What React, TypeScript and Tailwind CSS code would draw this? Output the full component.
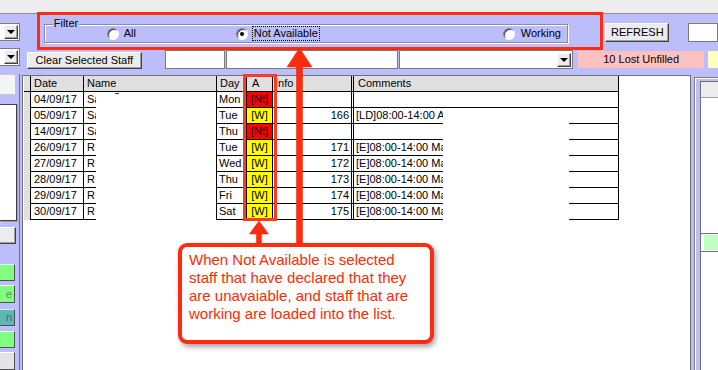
import React from 'react'

const rows = [
  { d: '04/09/17', n: 'Sa', day: 'Mon', a: '[Nt]', info: '', c: '' },
  { d: '05/09/17', n: 'Sa', day: 'Tue', a: '[W]', info: '166', c: '[LD]08:00-14:00 A' },
  { d: '14/09/17', n: 'Sa', day: 'Thu', a: '[Nt]', info: '', c: '' },
  { d: '26/09/17', n: 'R', day: 'Tue', a: '[W]', info: '171', c: '[E]08:00-14:00 Ma' },
  { d: '27/09/17', n: 'R', day: 'Wed', a: '[W]', info: '172', c: '[E]08:00-14:00 Ma' },
  { d: '28/09/17', n: 'R', day: 'Thu', a: '[W]', info: '173', c: '[E]08:00-14:00 Ma' },
  { d: '29/09/17', n: 'R', day: 'Fri', a: '[W]', info: '174', c: '[E]08:00-14:00 Ma' },
  { d: '30/09/17', n: 'R', day: 'Sat', a: '[W]', info: '175', c: '[E]08:00-14:00 Ma' },
]

const headers = [
  ['w-[53px] pl-[3px]', 'Date'],
  ['w-[133px] pl-[3px]', 'Name'],
  ['w-[30px] pl-[3px]', 'Day'],
  ['w-[26px] pl-[5px]', 'A'],
  ['w-[79px] pl-[2px]', 'Info'],
  ['w-[2px]', ''],
  ['w-[265px] pl-[4px]', 'Comments'],
]

const btn =
  'bg-[#ececec] border border-t-white border-l-white border-r-[#404040] border-b-[#404040] shadow-[inset_-1px_-1px_0_#a0a0a0]'
const edit = 'bg-white border border-[#7a7a7a]'

function Radio({ checked }: { checked?: boolean }) {
  return (
    <span className="w-[12px] h-[12px] rounded-full bg-white border border-[#808080] border-b-white border-r-white shadow-[inset_1px_1px_0_#404040] flex items-center justify-center">
      {checked && <span className="w-[4px] h-[4px] rounded-full bg-black" />}
    </span>
  )
}

function DropBtn() {
  return (
    <span className={`${btn} w-[14px] h-[14px] flex items-center justify-center`}>
      <span className="w-0 h-0 border-l-[4px] border-r-[4px] border-t-[4px] border-l-transparent border-r-transparent border-t-black" />
    </span>
  )
}

export default function App() {
  return (
    <div className="relative w-[718px] h-[370px] overflow-hidden bg-[#bcbefc] font-['Liberation_Sans',Arial,sans-serif] text-[11px] text-black leading-none">
      {/* title strip */}
      <div className="h-[14px] bg-[#ededed] border-b border-[#8e8e8e]" />

      {/* row 1 */}
      <div className="h-[34px] flex items-start">
        <div className="mt-[9px] w-[20px] h-[18px] bg-white border border-l-0 border-[#7a7a7a] flex items-center justify-end pr-[1px]">
          <DropBtn />
        </div>
        <div className="relative mt-[10px] ml-[24px] w-[532px] h-[19px] border border-[#8a8a9c] shadow-[inset_1px_1px_0_#ffffff,1px_1px_0_#ffffff] flex items-center">
          <span className="absolute -top-[7px] left-[8px] bg-[#bcbefc] px-[1px]">Filter</span>
          <div className="ml-[62px] w-[129px] flex items-center gap-[5px]">
            <Radio />
            <span>All</span>
          </div>
          <div className="w-[267px] flex items-center gap-[4px]">
            <Radio checked />
            <span className="border border-dotted border-black px-[1px] py-[1px]">Not Available</span>
          </div>
          <div className="flex items-center gap-[6px]">
            <Radio />
            <span>Working</span>
          </div>
        </div>
        <div className={`${btn} mt-[9px] ml-[37px] w-[65px] h-[19px] flex items-center justify-center`}>REFRESH</div>
        <div className={`${edit} mt-[9px] ml-[19px] w-[30px] h-[19px]`} />
      </div>

      {/* row 2 */}
      <div className="h-[24px] flex items-start">
        <div className="w-[20px] h-[18px] bg-white border border-l-0 border-[#7a7a7a] flex items-center justify-end pr-[1px]">
          <DropBtn />
        </div>
        <div className={`${btn} mt-[4px] ml-[7px] w-[116px] h-[17px] flex items-center justify-center`}>Clear Selected Staff</div>
        <div className={`${edit} mt-[2px] ml-[23px] w-[61px] h-[19px]`} />
        <div className={`${edit} mt-[2px] ml-[1px] w-[173px] h-[19px]`} />
        <div className={`${edit} mt-[2px] ml-[1px] w-[176px] h-[19px] flex items-center justify-end pr-[1px]`}>
          <DropBtn />
        </div>
        <div className="mt-[3px] ml-[5px] w-[127px] h-[17px] bg-[#ffc0c0] flex items-center justify-center">10 Lost Unfilled</div>
        <div className="mt-[3px] ml-[4px] w-[10px] h-[17px] bg-[#ffffc0]" />
      </div>

      {/* main area */}
      <div className="flex items-start h-[298px]">
        {/* left sidebar */}
        <div className="mt-[2px] w-[20px] h-[296px] border-r border-[#707070] flex flex-col">
          <div className="w-[16px] h-[21px] bg-[#f4f4f4] border border-l-0 border-[#c8c8c8]" />
          <div className="mt-[9px] w-[17px] h-[120px] bg-white border border-l-0 border-[#404040] shadow-[1px_1px_0_#a0a0a0]" />
          <div className={`${btn} border-l-0 mt-[6px] w-[16px] h-[17px]`} />
          <div className="mt-[20px] w-[15px] h-[18px] bg-[#80ff80] border border-l-0 border-t-[#e0ffe0] border-r-[#505050] border-b-[#505050]" />
          <div className="mt-[4px] w-[15px] h-[18px] bg-[#80ff80] border border-l-0 border-t-[#e0ffe0] border-r-[#505050] border-b-[#505050] flex items-center justify-end pr-[2px] text-[#5c8c5c] overflow-hidden">e</div>
          <div className="mt-[6px] w-[15px] h-[17px] bg-[#5eb6b6] border border-l-0 border-t-[#d0f0f0] border-r-[#505050] border-b-[#505050] flex items-center justify-end pr-[2px] text-[#2f7480] overflow-hidden">n</div>
          <div className="mt-[5px] w-[15px] h-[18px] bg-[#80ff80] border border-l-0 border-t-[#e0ffe0] border-r-[#505050] border-b-[#505050]" />
          <div className="mt-[4px] w-[15px] h-[18px] bg-[#e4e4e4] border border-l-0 border-t-white border-r-[#505050] border-b-[#505050]" />
        </div>

        {/* grid panel */}
        <div className="mt-[3px] ml-[2px] w-[669px] h-[295px] bg-white border-l border-r border-t border-[#707070] pl-[1px]">
          {/* header */}
          <div className="flex h-[16px]">
            <div className="w-[7px] h-full bg-[#e0e0e0] border-r border-b border-black" />
            {headers.map(([w, t], i) => (
              <div key={i} className={`${w} h-full bg-[#e0e0e0] border-r border-b border-black flex items-center overflow-hidden whitespace-nowrap`}>
                {t}
              </div>
            ))}
          </div>
          {/* rows */}
          {rows.map((r, i) => (
            <div key={i} className="flex h-[16px]">
              <div className="w-[7px] h-full bg-[#e0e0e0] border-r border-black" />
              <div className="w-[53px] h-full border-r border-b border-black flex items-center pl-[3px]">{r.d}</div>
              <div className="relative w-[133px] h-full border-r border-black flex">
                <div className="w-[12px] h-full border-b border-black overflow-hidden whitespace-nowrap pl-[3px] flex items-center">{r.n}</div>
                {i === 0 && <span className="absolute left-[31px] top-[1px] w-[4px] h-[1px] bg-[#333]" />}
              </div>
              <div className="w-[30px] h-full border-r border-b border-black flex items-center pl-[2px]">{r.day}</div>
              <div className={`w-[26px] h-full border-r border-b border-black flex items-center justify-center whitespace-nowrap ${r.a === '[Nt]' ? 'bg-[#ff0000]' : 'bg-[#ffff00]'}`}>
                {r.a}
              </div>
              <div className="w-[79px] h-full border-r border-b border-black flex items-center justify-end pr-[2px]">{r.info}</div>
              <div className="w-[2px] h-full border-r border-b border-black" />
              {i === 0 ? (
                <div className="w-[265px] h-full border-r border-b border-black" />
              ) : (
                <div className="w-[265px] h-full border-r border-black flex">
                  <div className="w-[89px] h-full border-b border-black overflow-hidden whitespace-nowrap pl-[2px] flex items-center">{r.c}</div>
                  <div className="w-[126px] h-full" />
                  <div className="flex-1 h-full border-b border-black" />
                </div>
              )}
            </div>
          ))}
        </div>

        {/* right panel */}
        <div className="mt-[5px] ml-[3px] flex-1 h-[293px] border-l border-t border-[#808080] shadow-[inset_1px_1px_0_#ffffff] pl-[5px] pt-[3px]">
          <div className="h-full bg-white border-l border-t border-[#707070]">
            <div className="h-[16px] bg-[#ececec] border-b border-[#a0a0a0]" />
            <div className="mt-[135px] h-[19px] border-t border-b border-[#707070] pl-[3px] pt-[1px]">
              <div className="h-[15px] bg-[#c0ffc0]" />
            </div>
          </div>
        </div>
      </div>

      {/* annotation: filter highlight */}
      <div className="absolute left-[37px] top-[12px] w-[566px] h-[38px] border-[3px] border-[#ff2b0f]" />
      {/* annotation: A column highlight */}
      <div className="absolute left-[243px] top-[74px] w-[34px] h-[147px] border-[3px] border-[#ff3a1e]" />

      {/* arrows */}
      <svg className="absolute left-0 top-0 pointer-events-none" width="718" height="370" viewBox="0 0 718 370">
        <path d="M259 221 L268.5 234 L261.5 234 L261.5 246 L256.5 246 L256.5 234 L249.5 234 Z" fill="#ff2b0f" stroke="#e02000" strokeWidth="0.5" />
        <path d="M299.5 48 L312 67 L302.5 67 L302.5 246 L296.5 246 L296.5 67 L287 67 Z" fill="#ff2b0f" stroke="#e02000" strokeWidth="0.5" />
      </svg>

      {/* callout */}
      <div className="absolute left-[178px] top-[243px] w-[256px] h-[101px] bg-white border-[4px] border-[#ff2b0f] rounded-[9px] shadow-[2px_3px_5px_rgba(0,0,0,0.35)] pl-[7px] pt-[4px] text-[15px] leading-[18px] text-[#ff2a00]">
        When Not Available is selected
        <br />
        staff that have declared that they
        <br />
        are unavaiable, and staff that are
        <br />
        working are loaded into the list.
      </div>
    </div>
  )
}
